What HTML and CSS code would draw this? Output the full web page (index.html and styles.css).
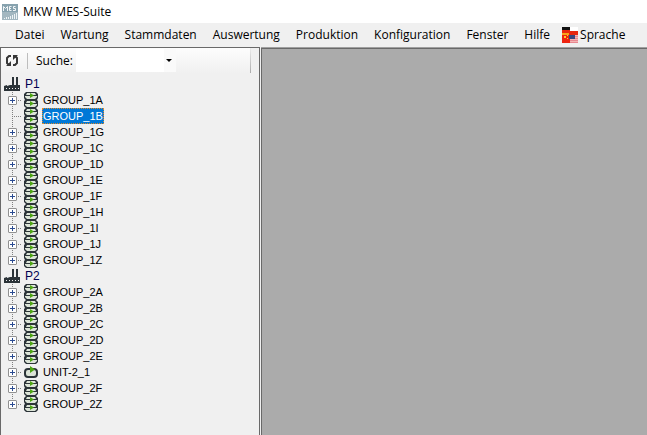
FILE: index.html
```html
<!DOCTYPE html>
<html lang="de">
<head>
  <meta charset="UTF-8">
  <meta name="viewport" content="width=device-width, initial-scale=1.0">
  <title>MKW MES-Suite</title>
  <link rel="stylesheet" href="styles.css">
</head>
<body>

<header class="title-bar">
  <svg class="icon" viewBox="0 0 16 16" aria-hidden="true">
    <rect width="16" height="16" fill="#87a2ae"/>
    <path d="M0 8h16v8H0z" fill="#a3b7c0"/>
    <path d="M1.500 7V2.500L3.500 4.500 5.500 2.500V7M9.500 2.500H7.500V6.500H9.500M7.500 4.500H9M13.500 2.500H11.500V4.500H13.500V6.500H11" fill="none" stroke="#f2f6f8"/>
    <path d="M2 15v-1h1v1zM4 15v-2h1v2zM6 15v-2h1v2zM8 15v-3h1v3zM10 15v-4h1v4zM12 15v-5h1v5zM14 15V9h1v6z" fill="#eef3f5"/>
  </svg>
  <h1>MKW MES-Suite</h1>
</header>

<nav class="menu-bar">
  <button type="button">Datei</button>
  <button type="button">Wartung</button>
  <button type="button">Stammdaten</button>
  <button type="button">Auswertung</button>
  <button type="button">Produktion</button>
  <button type="button">Konfiguration</button>
  <button type="button">Fenster</button>
  <button type="button">Hilfe</button>
  <button type="button" class="language">
    <svg class="icon" viewBox="0 0 16 16" aria-hidden="true">
      <path d="M0 0h8v3H0z" fill="#111"/>
      <path d="M0 3h8v3H0z" fill="#e8260f"/>
      <path d="M0 6h7v2H0z" fill="#f7a21b"/>
      <path d="M8 0h8v4H8z" fill="#fff"/>
      <path d="M7 4h9v4H7z" fill="#e8260f"/>
      <path d="M0 8h8v8H0z" fill="#ee2410"/>
      <path d="M2 9h2v2H2zM5 8h1v1H5zM5 11h1v1H5z" fill="#ffc928"/>
      <path d="M8 8h8v8H8z" fill="#f4b4b4"/>
      <path d="M8 13h8v1H8zM8 15h8v1H8zM13 9h3v1h-3zM13 11h3v1h-3z" fill="#e88890"/>
      <path d="M7 8h6v4H7z" fill="#36487f"/>
    </svg>
    Sprache
  </button>
</nav>

<main class="workspace">
  <aside class="side-panel">
    <div class="tool-bar">
      <button type="button" class="refresh" aria-label="Aktualisieren">
        <svg class="icon" viewBox="0 0 16 16" aria-hidden="true">
          <path d="M7 3H5L3 5V10L5 12M9 12H11L13 10V5L11 3" fill="none" stroke="#383838" stroke-width="2"/>
          <path d="M2 13H7V8zM14 2H9V7z" fill="#383838"/>
        </svg>
      </button>
      <label for="search">Suche:</label>
      <div class="combo">
        <select id="search">
          <option value=""></option>
        </select>
      </div>
    </div>

    <ul class="tree">
      <li>
        <div class="root"><svg class="icon"><use href="#factory"/></svg><span>P1</span></div>
        <ul>
          <li><button type="button" aria-label="Öffnen"></button><svg class="icon"><use href="#group"/></svg><span>GROUP_1A</span></li>
          <li class="leaf"><svg class="icon"><use href="#group"/></svg><span class="selected">GROUP_1B</span></li>
          <li><button type="button" aria-label="Öffnen"></button><svg class="icon"><use href="#group"/></svg><span>GROUP_1G</span></li>
          <li><button type="button" aria-label="Öffnen"></button><svg class="icon"><use href="#group"/></svg><span>GROUP_1C</span></li>
          <li><button type="button" aria-label="Öffnen"></button><svg class="icon"><use href="#group"/></svg><span>GROUP_1D</span></li>
          <li><button type="button" aria-label="Öffnen"></button><svg class="icon"><use href="#group"/></svg><span>GROUP_1E</span></li>
          <li><button type="button" aria-label="Öffnen"></button><svg class="icon"><use href="#group"/></svg><span>GROUP_1F</span></li>
          <li><button type="button" aria-label="Öffnen"></button><svg class="icon"><use href="#group"/></svg><span>GROUP_1H</span></li>
          <li><button type="button" aria-label="Öffnen"></button><svg class="icon"><use href="#group"/></svg><span>GROUP_1I</span></li>
          <li><button type="button" aria-label="Öffnen"></button><svg class="icon"><use href="#group"/></svg><span>GROUP_1J</span></li>
          <li><button type="button" aria-label="Öffnen"></button><svg class="icon"><use href="#group"/></svg><span>GROUP_1Z</span></li>
        </ul>
      </li>
      <li>
        <div class="root"><svg class="icon"><use href="#factory"/></svg><span>P2</span></div>
        <ul>
          <li><button type="button" aria-label="Öffnen"></button><svg class="icon"><use href="#group"/></svg><span>GROUP_2A</span></li>
          <li><button type="button" aria-label="Öffnen"></button><svg class="icon"><use href="#group"/></svg><span>GROUP_2B</span></li>
          <li><button type="button" aria-label="Öffnen"></button><svg class="icon"><use href="#group"/></svg><span>GROUP_2C</span></li>
          <li><button type="button" aria-label="Öffnen"></button><svg class="icon"><use href="#group"/></svg><span>GROUP_2D</span></li>
          <li><button type="button" aria-label="Öffnen"></button><svg class="icon"><use href="#group"/></svg><span>GROUP_2E</span></li>
          <li><button type="button" aria-label="Öffnen"></button><svg class="icon"><use href="#unit"/></svg><span>UNIT-2_1</span></li>
          <li><button type="button" aria-label="Öffnen"></button><svg class="icon"><use href="#group"/></svg><span>GROUP_2F</span></li>
          <li><button type="button" aria-label="Öffnen"></button><svg class="icon"><use href="#group"/></svg><span>GROUP_2Z</span></li>
        </ul>
      </li>
    </ul>
  </aside>

  <section class="mdi-area"></section>
</main>

<!-- Tree icons -->
<svg class="symbols" aria-hidden="true">
  <symbol id="factory" viewBox="0 0 16 16">
    <path d="M0 10l3-1v1l3-1h2V1h2v8h2V1h2v8h2v6H0z" fill="#2b3338"/>
    <path d="M2 12h1v1H2zM5 12h1v1H5zM8 12h1v1H8zM11 12h1v1h-1zM14 12h1v1h-1z" fill="#f0f0f0"/>
  </symbol>
  <symbol id="group" viewBox="0 0 16 16">
    <path d="M3 0h10l2 2v4l-1 2 1 1v5l-2 2H3l-2-2V9l1-1-1-2V2z" fill="#2b3338"/>
    <path d="M4 1h8l1 2H3zM2 4h12v1l-2 2H4L2 5zM4 9h8l1 2H3zM2 12h12v1l-2 2H4l-2-2z" fill="#dce4d8"/>
    <path d="M7 1l4 2.500L7 6zM7 9l4 2.500L7 14z" fill="#4ca512"/>
  </symbol>
  <symbol id="unit" viewBox="0 0 16 16">
    <rect x="2" y="5" width="12" height="8" rx="3" fill="#dce4d8" stroke="#2b3338" stroke-width="2"/>
    <path d="M7 2l5 3.500L7 9z" fill="#4ca512"/>
  </symbol>
</svg>

</body>
</html>
```
FILE: styles.css
```css
* {
  box-sizing: border-box;
}
body {
  display: flex;
  flex-direction: column;
  min-height: 100vh;
  margin: 0;
  background: #f0f0f0;
  color: #000;
  font: 12px/16px "Open Sans", "Noto Sans", sans-serif;
}
button,
select {
  margin: 0;
  padding: 0;
  border: none;
  background: none;
  color: inherit;
  font: inherit;
}
ul {
  list-style: none;
  margin: 0;
  padding: 0;
}
.icon {
  flex: none;
  width: 16px;
  height: 16px;
}
.symbols {
  position: absolute;
  width: 0;
  height: 0;
}

/* Title and menu */
.title-bar {
  display: flex;
  align-items: center;
  gap: 5px;
  height: 23px;
  padding-left: 2px;
  background: #fff;
}
.title-bar h1 {
  margin: 0;
  font-size: 12px;
  font-weight: normal;
}
.menu-bar {
  display: flex;
  align-items: center;
  gap: 16px;
  height: 24px;
  padding-left: 15px;
}
.menu-bar button {
  white-space: nowrap;
}
.menu-bar .language {
  display: flex;
  gap: 2px;
  margin-left: -4px;
}

/* Workspace */
.workspace {
  display: flex;
  flex: 1;
}
.side-panel {
  width: 260px;
  border: solid #696969;
  border-width: 1px 1px 0;
}
.mdi-area {
  flex: 1;
  margin-left: 1px;
  border-top: 1px solid #a0a0a0;
  background: #ababab;
  box-shadow: inset 1px 1px #696969;
}

/* Search bar */
.tool-bar {
  display: flex;
  align-items: center;
  width: 250px;
  height: 25px;
  background: linear-gradient(#fdfdfd, #f0f0f0);
  border-right: 1px solid;
  border-image: linear-gradient(#f0f0f0, #a8a8a8) 1;
}
.refresh {
  display: flex;
  margin-left: 3px;
}
.tool-bar label {
  margin-left: 7px;
  padding-left: 8px;
  border-left: 1px solid #bdbdbd;
}
.combo {
  position: relative;
  width: 100px;
  height: 23px;
  margin-left: 3px;
}
.combo select {
  appearance: none;
  width: 100%;
  height: 100%;
  background: linear-gradient(to right, #fff 88px, #fafafa 88px);
}
.combo::after {
  content: "";
  position: absolute;
  top: 10px;
  right: 4px;
  border: 3px solid transparent;
  border-top-color: #000;
  pointer-events: none;
}

/* Tree */
.tree {
  padding: 3px 0 0 3px;
  font: 11px/16px "Liberation Sans", Arial, sans-serif;
}
.tree .root {
  display: flex;
  gap: 3px;
}
.tree .root span {
  padding: 0 2px;
  color: #000050;
  font-size: 12px;
}
.tree ul li {
  display: flex;
  align-items: center;
  height: 16px;
  padding-left: 4px;
  background:
    repeating-linear-gradient(#808080 0 1px, transparent 1px 2px) 8px 0 / 1px 100% no-repeat,
    repeating-linear-gradient(to right, #808080 0 1px, transparent 1px 2px) 8px 8px / 10px 1px no-repeat;
}
.tree ul li:last-child {
  background-size: 1px 8px, 10px 1px;
}
.tree ul .leaf {
  padding-left: 13px;
}
.tree ul button {
  width: 9px;
  height: 9px;
  border: 1px solid #919191;
  border-radius: 1px;
  background:
    linear-gradient(#2b4b91, #2b4b91) center / 5px 1px no-repeat,
    linear-gradient(#2b4b91, #2b4b91) center / 1px 5px no-repeat,
    #fff;
}
.tree ul .icon {
  margin: 0 3px 0 6px;
}
.tree ul span {
  padding: 0 1px;
}
.tree .selected {
  background: #0078d7;
  color: #fff;
  outline: 1px dotted #e08a28;
  outline-offset: -1px;
}
```
